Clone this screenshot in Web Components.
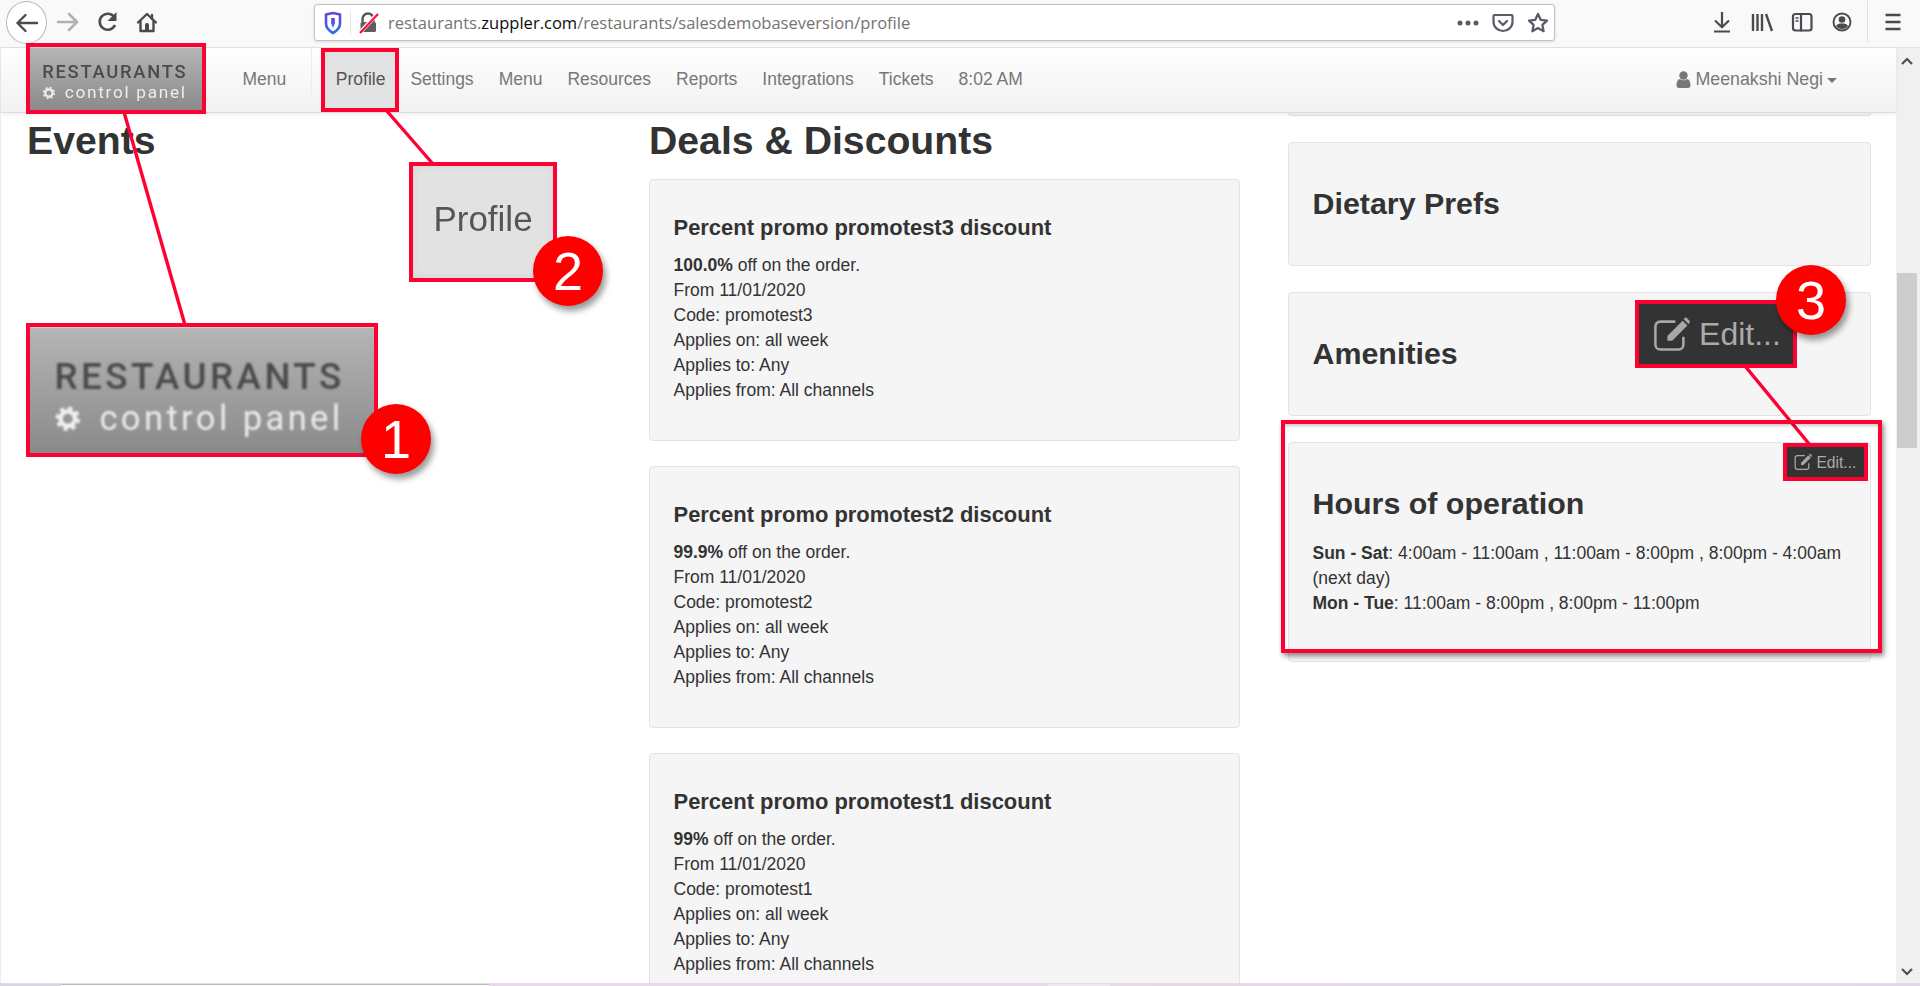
<!DOCTYPE html>
<html lang="en"><head><meta charset="utf-8"><title>Profile</title>
<style>
html,body{margin:0;padding:0;height:100%;overflow:hidden;background:#fff}
body{font-family:"Liberation Sans",Arial,sans-serif;color:#333}
</style></head>
<body>
<app-window>
  <browser-toolbar></browser-toolbar>
  <page-view>
    <app-navbar slot="nav"></app-navbar>
    <section-col slot="a" heading="Events"></section-col>
    <section-col slot="b" heading="Deals &amp; Discounts">
      <promo-card code="promotest3" pct="100.0%"></promo-card>
      <promo-card code="promotest2" pct="99.9%"></promo-card>
      <promo-card code="promotest1" pct="99%"></promo-card>
    </section-col>
    <section-col slot="c">
      <info-card sliver></info-card>
      <info-card heading="Dietary Prefs"></info-card>
      <info-card heading="Amenities"></info-card>
      <info-card heading="Hours of operation" editable>
        <div><b>Sun - Sat</b>: 4:00am - 11:00am , 11:00am - 8:00pm , 8:00pm - 4:00am</div>
        <div>(next day)</div>
        <div><b>Mon - Tue</b>: 11:00am - 8:00pm , 8:00pm - 11:00pm</div>
      </info-card>
    </section-col>
  </page-view>
  <task-strip></task-strip>
  <annotation-layer>
    <anno-lines></anno-lines>
    <anno-box style="left:26px;top:43px;width:180px;height:71px"></anno-box>
    <anno-box style="left:321px;top:48px;width:78px;height:64px"></anno-box>
    <anno-box style="left:26px;top:323px;width:352px;height:134px"><brand-logo big></brand-logo></anno-box>
    <anno-box style="left:409px;top:162px;width:148px;height:120px"><big-profile>Profile</big-profile></anno-box>
    <anno-box shadow style="left:1281px;top:420px;width:601px;height:233px"></anno-box>
    <anno-box style="left:1635px;top:300px;width:162px;height:68px"><edit-label big></edit-label></anno-box>
    <anno-box style="left:1783px;top:443px;width:85px;height:38px"></anno-box>
    <anno-badge style="left:361px;top:404px">1</anno-badge>
    <anno-badge style="left:533px;top:236px">2</anno-badge>
    <anno-badge style="left:1776px;top:265px">3</anno-badge>
  </annotation-layer>
</app-window>

<script>
function def(name, css, html){
  customElements.define(name, class extends HTMLElement{
    constructor(){super();this.attachShadow({mode:'open'});
      if(typeof html!=='function')this.shadowRoot.innerHTML='<style>'+css+'</style>'+html;}
    connectedCallback(){
      if(typeof html==='function')this.shadowRoot.innerHTML='<style>'+css+'</style>'+html(this);
    }
  });
}
const ic=(x,w=40)=>`<svg width="${w}" height="44" viewBox="0 0 ${w} 44" fill="none" stroke="#4a4a4f" stroke-width="2.2" stroke-linecap="round" stroke-linejoin="round">${x}</svg>`;
const I={
 fwd:ic('<path stroke="#b1b1b3" stroke-width="2.6" d="M11 22h19M22 14l8 8-8 8"/>'),
 reload:ic('<path stroke-width="2.6" stroke-linecap="butt" d="M27.5 17.5A8 8 0 1 0 28 25"/><path fill="#4a4a4f" stroke="none" d="M29.5 12v9h-9z"/>'),
 home:ic('<path stroke-width="2.4" d="M11 22.5 20 14l9 8.5M13.5 21v10h13V21"/><path fill="#4a4a4f" stroke="none" d="M18 31v-6a2 2 0 0 1 4 0v6z"/><path stroke-width="2.4" d="M25 15v4"/>'),
 shield:`<svg width="18" height="24" viewBox="0 0 18 24" fill="none"><defs><linearGradient id="g" x1="0" y1="0" x2="0" y2="1"><stop offset="0" stop-color="#6a3fe0"/><stop offset="1" stop-color="#2f6fe8"/></linearGradient></defs><path d="M2 3.500 9 2l7 1.500v9c0 4.500-3.500 7.500-7 9.500-3.500-2-7-5-7-9.500z" stroke="url(#g)" stroke-width="2.600" stroke-linejoin="round"/><path d="M7.200 7h3.600v5.500L9 17l-1.800-4.500z" fill="url(#g)"/></svg>`,
 lock:`<svg width="20" height="22" viewBox="0 0 20 22" fill="none"><path d="M3.500 10V7a5.500 5.500 0 0 1 11 0v3" stroke="#555" stroke-width="2.400"/><rect x="1.500" y="10" width="15.500" height="10" rx="1.500" fill="#5f5f63"/><path d="M0.800 20.500 19 1.500" stroke="#f5f5f5" stroke-width="4"/><path d="M1 21 19 2" stroke="#ff0a3c" stroke-width="2"/></svg>`,
 dots:`<svg width="24" height="8" viewBox="0 0 24 8" fill="#5b5b66"><circle cx="4" cy="4" r="2.500"/><circle cx="12" cy="4" r="2.500"/><circle cx="20" cy="4" r="2.500"/></svg>`,
 pocket:`<svg width="22" height="20" viewBox="0 0 22 20" fill="none" stroke="#5b5b66" stroke-width="2.200" stroke-linecap="round" stroke-linejoin="round"><path d="M2.500 2h17a1 1 0 0 1 1 1v6c0 5-4.500 9-9.500 9S1.500 14 1.500 9V3a1 1 0 0 1 1-1z"/><path d="M7 8l4 4 4-4"/></svg>`,
 star:`<svg width="22" height="22" viewBox="0 0 22 22" fill="none" stroke="#5b5b66" stroke-width="2.300" stroke-linejoin="round"><path d="M11 2l2.700 5.800 6.300.8-4.600 4.300 1.200 6.300L11 16.100l-5.600 3.100 1.200-6.300L2 8.600l6.300-.8z"/></svg>`,
 dl:ic('<path stroke-linecap="butt" d="M20 12v15M13 20.500l7 6.800 7-6.800M12 31.500h16"/>'),
 lib:ic('<path stroke-width="2.400" stroke-linecap="butt" d="M11 14v17M15.500 14v17M20 14v17M24 14l6 17"/>'),
 side:ic('<rect x="11" y="14" width="18.500" height="16.500" rx="2.500"/><path d="M19 14v16.500"/><path stroke-width="1.300" stroke-linecap="butt" d="M13.500 18h3M13.500 21h3"/>'),
 acct:ic('<circle cx="20" cy="22" r="8.500" stroke-width="1.900"/><circle cx="20" cy="19.500" r="3.300" fill="#4a4a4f" stroke="none"/><path d="M14 26c1-2 3-2.500 6-2.500s5 .5 6 2.500c-1.500 2-3.500 3-6 3s-4.500-1-6-3z" fill="#4a4a4f" stroke="none"/>'),
 burger:ic('<path stroke-linecap="butt" stroke-width="2.400" d="M12.500 15h15M12.500 22h15M12.500 29h15"/>'),
 user:`<svg width="15" height="17" viewBox="0 0 15 17" fill="#777"><circle cx="7.500" cy="4.500" r="4.200"/><path d="M0.500 14.500c0-4 1.500-6.300 3.500-6.500 1 .8 2.200 1.300 3.500 1.300S10 8.800 11 8c2 .2 3.500 2.500 3.500 6.500 0 1.500-1 2.500-2.500 2.500H3c-1.500 0-2.500-1-2.500-2.500z"/></svg>`,
 gear:`<svg class="gear" viewBox="0 0 16 16" fill="none" stroke="#f0f0f0"><circle cx="8" cy="8" r="4.200" stroke-width="2.600"/><circle cx="8" cy="8" r="6.200" stroke-width="1.800" stroke-dasharray="2.500 2.370"/></svg>`,
 edit:`<svg class="pen" viewBox="0 0 24 22" fill="none" stroke="#a8a8a8"><path stroke-width="1.600" d="M19 13v5a3 3 0 0 1-3 3H4.500a3 3 0 0 1-3-3V6.500a3 3 0 0 1 3-3H14"/><path fill="#a8a8a8" stroke="none" d="M9 12.500 18.500 3l3 3L12 15.500H9z"/><path fill="#a8a8a8" stroke="none" d="M19.700 1.300a1.100 1.100 0 0 1 1.500 0l1.600 1.600a1.100 1.100 0 0 1 0 1.500L22.200 5 19.200 2z"/></svg>`
};

def('app-window',':host{display:flex;flex-direction:column;position:relative;width:1920px;height:986px;overflow:hidden;background:#fff}','<slot></slot>');

def('browser-toolbar',`
:host{display:flex;align-items:flex-start;height:47px;flex:none;background:#f9f9fa;border-bottom:1px solid #e1e1e2;padding-right:7px}
.cell{width:40px;height:44px;flex:none;display:flex}
.back{width:39px;height:41px;margin:1px 0 0 6px;flex:none;border-radius:50%;background:#fff;border:1px solid #b8b8ba;display:flex;align-items:center;justify-content:center}
address-bar{flex:1;margin:4px 147px 0 147px}
.sep{width:1px;height:42px;margin:1px 5px 0;background:#e0e0e1;flex:none}
`,`<div class="back"><svg width="24" height="20" viewBox="0 0 24 20" fill="none" stroke="#4a4a4f" stroke-width="2.400" stroke-linecap="round" stroke-linejoin="round"><path d="M2.500 10H22M10.500 2 2.500 10l8 8"/></svg></div>
<div class="cell">${I.fwd}</div><div class="cell">${I.reload}</div><div class="cell">${I.home}</div>
<address-bar></address-bar>
<div class="cell">${I.dl}</div><div class="cell">${I.lib}</div><div class="cell">${I.side}</div><div class="cell">${I.acct}</div>
<div class="sep"></div><div class="cell">${I.burger}</div>`);

def('address-bar',`
:host{display:flex;align-items:center;height:37px;box-sizing:border-box;background:#fff;border:1px solid #c2c2c4;border-radius:3px;box-shadow:0 1px 3px rgba(0,0,0,.12);font-family:"Open Sans",sans-serif;font-size:16.550px;color:#737373;padding:0 0 0 9px}
.sh{display:flex;width:18px;margin-right:8px}
.div{width:1px;height:24px;background:#e4e4e5;margin-right:8px}
.lk{display:flex;margin-right:9px}
.url{flex:1;white-space:nowrap}
b{font-weight:400;color:#0c0c0d}
.r{display:flex;align-items:center}
`,`<span class="sh">${I.shield}</span><span class="div"></span><span class="lk">${I.lock}</span>
<span class="url">restaurants.<b>zuppler.com</b>/restaurants/salesdemobaseversion/profile</span>
<span class="r"><span style="display:flex;margin-right:12px">${I.dots}</span><span style="display:flex;margin-right:13px">${I.pocket}</span><span style="display:flex;margin-right:5px">${I.star}</span></span>`);

def('page-view',`
:host{display:flex;flex:1;min-height:0;position:relative}
.left{flex:1;min-width:0;display:flex;flex-direction:column;border-left:1px solid #ececec}
.grid{flex:1;min-height:0;overflow:hidden;display:grid;grid-template-columns:574px 591px 583px;column-gap:48px;padding-left:26px;align-items:start}
.sb{width:24px;flex:none;background:#f0f0f0;display:flex;flex-direction:column;position:relative}
.ch{height:25px;display:flex;align-items:center;justify-content:center;width:22px}
.th{margin:200px 0 0 1px;width:20px;height:175px;background:#cdcdcd}
.sp{flex:1}
`,`<div class="left"><slot name="nav"></slot><div class="grid"><slot name="a"></slot><slot name="b"></slot><slot name="c"></slot></div></div>
<div class="sb"><div class="ch"><svg width="12" height="8" viewBox="0 0 12 8" fill="none" stroke="#505050" stroke-width="2.200"><path d="M1 7l5-5 5 5"/></svg></div><div class="th"></div><div class="sp"></div><div class="ch" style="height:22px"><svg width="12" height="8" viewBox="0 0 12 8" fill="none" stroke="#505050" stroke-width="2.200"><path d="M1 1l5 5 5-5"/></svg></div></div>`);

def('app-navbar',`
:host{display:flex;align-items:stretch;height:64px;flex:none;position:relative;z-index:2;background:linear-gradient(#fff,#f1f1f1);border-bottom:1px solid #dcdcdc;box-shadow:0 2px 5px rgba(0,0,0,.06);font-size:17.500px;color:#777}
brand-logo{width:172px;height:63px;margin:-1px 0 0 29px;flex:none}
nav-item:first-of-type{margin-left:28px}
.div{width:1px;margin:0 11.500px 14px 12px;background:#ececec}
.user{margin-left:auto;padding:0 59px 2px 0;display:flex;align-items:center;gap:5px;font-size:17.800px}
.caret{width:0;height:0;border:5.500px solid transparent;border-top-color:#777;border-bottom:0;margin-left:-1px;margin-top:2px}
`,`<brand-logo></brand-logo><nav-item>Menu</nav-item><div class="div"></div>
<nav-item active>Profile</nav-item><nav-item>Settings</nav-item><nav-item>Menu</nav-item><nav-item>Resources</nav-item><nav-item>Reports</nav-item><nav-item>Integrations</nav-item><nav-item>Tickets</nav-item><nav-item>8:02 AM</nav-item>
<div class="user">${I.user}<span>Meenakshi Negi</span><span class="caret"></span></div>`);

def('nav-item',`
:host{display:flex;align-items:center;padding:0 12.500px 2px;white-space:nowrap;color:#777}
:host([active]){color:#555;background:#e3e3e3;box-shadow:inset 0 2px 6px rgba(0,0,0,.07)}
`,'<slot></slot>');

def('brand-logo',`
:host{display:block;box-sizing:border-box;font-size:18px;background:linear-gradient(#b5b5b5,#8a8a8a);border-top:1px solid #cfcfcf;padding:.83em 0 0 .68em;font-family:Roboto,"Liberation Sans",sans-serif;white-space:nowrap;overflow:hidden}
:host([big]){font-size:36px;width:100%;height:100%;padding-top:.86em}
.in{filter:blur(.3px)}
:host([big]) .in{filter:blur(.8px)}
.a{line-height:1em;letter-spacing:.094em;color:#4b4b4b;font-weight:500;font-size:1.02em}
.b{line-height:1em;margin-top:.16em;color:#ececec;font-size:.96em;letter-spacing:.098em;display:flex;align-items:center}
.gear{width:.8em;height:.8em;margin-right:.5em;flex:none}
`,`<div class="in"><div class="a">RESTAURANTS</div><div class="b">${I.gear}<span>control panel</span></div></div>`);

def('big-profile',`
:host{display:flex;box-sizing:border-box;width:100%;height:100%;padding-bottom:6px;align-items:center;justify-content:center;background:#e2e2e2;box-shadow:inset 0 0 8px rgba(0,0,0,.06);color:#555;font-size:35px}
span{filter:blur(.4px)}`,'<span><slot></slot></span>');

def('section-col',`
:host{display:block;min-width:0}
h2{font-size:39.200px;line-height:44px;margin:6px 0 16px;font-weight:700;color:#333;white-space:nowrap}
.list{display:flex;flex-direction:column;gap:25px}
`,h=>`${h.getAttribute('heading')?`<h2>${h.getAttribute('heading').replace('&','&amp;')}</h2>`:''}<div class="list" style="${h.getAttribute('heading')?'':'gap:26px'}"><slot></slot></div>`);

def('promo-card',`
:host{display:block;box-sizing:border-box;height:262px;background:#f5f5f5;border:1px solid #e3e3e3;border-radius:4px;padding:36px 24px 36px 23.500px;font-size:17.500px;line-height:25px;color:#333}
h4{font-size:21.950px;line-height:24px;margin:0 0 13px;font-weight:700}
`,h=>{const c=h.getAttribute('code');return `<h4>Percent promo ${c} discount</h4><div><b>${h.getAttribute('pct')}</b> off on the order.</div><div>From 11/01/2020</div><div>Code: ${c}</div><div>Applies on: all week</div><div>Applies to: Any</div><div>Applies from: All channels</div>`});

def('info-card',`
:host{display:block;position:relative;box-sizing:border-box;background:#f5f5f5;border:1px solid #e3e3e3;border-radius:4px;padding:43px 24px 45px 23.500px;font-size:17.500px;line-height:25px;color:#333}
:host([sliver]){height:3px;padding:0;border-top:0;border-radius:0 0 4px 4px}
h3{font-size:30.400px;line-height:34px;margin:0;font-weight:700;white-space:nowrap}
.body{margin-top:21px}
edit-label{position:absolute;top:4px;right:6px;width:77px;height:30px;background:#333}
`,h=>{
  if(h.hasAttribute('sliver'))return '';
  const ed=h.hasAttribute('editable');
  return `${ed?'<edit-label></edit-label>':''}<h3>${h.getAttribute('heading')}</h3>${ed?'<div class="body"><slot></slot></div>':''}`});

def('edit-label',`
:host{display:flex;align-items:center;font-size:15.600px;color:#aaa;background:#333;padding-left:7px;box-sizing:border-box;white-space:nowrap;font-family:"Liberation Sans",sans-serif}
:host([big]){font-size:32px;width:100%;height:100%;padding-left:14px}
.pen{width:1.2em;height:1.1em;margin-right:.24em;flex:none}
`,`${I.edit}<span>Edit...</span>`);

def('task-strip',`
:host{display:flex;flex:none;background:#e7d9e9;border-top:1px solid #dfdfdf;height:2px}
i{display:block;height:100%}
`,`<i style="width:61px;background:#d9d6e6"></i><i style="width:428px;background:#fff;box-shadow:inset 0 1px 0 #bbb"></i><i style="width:559px"></i><i style="width:62px;background:#f0e8f0"></i><i style="flex:1;background:linear-gradient(90deg,#e8d8e8,#e0d8ea)"></i>`);

def('annotation-layer',':host{position:absolute;inset:0;z-index:5;pointer-events:none;display:block}','<slot></slot>');

def('anno-lines',':host{position:absolute;inset:0;display:block}svg{display:block}',
`<svg width="1920" height="986" viewBox="0 0 1920 986" fill="none" stroke="#ff0033" stroke-width="3.400"><path d="M124 112 185 325"/><path d="M386 110 433 164"/><path d="M1745 366 1810 445"/></svg>`);

def('anno-box',`
:host{position:absolute;display:block;box-sizing:border-box;border:4px solid #ff0033}
:host([shadow]){box-shadow:2px 3px 5px rgba(0,0,0,.45),inset 0 3px 4px -2px rgba(0,0,0,.3)}
`,'<slot></slot>');

def('anno-badge',`
:host{position:absolute;display:flex;align-items:center;justify-content:center;width:70px;height:70px;border-radius:50%;background:#ff0000;color:#fff;font-size:54px;line-height:1;box-shadow:3px 5px 6px rgba(0,0,0,.4);font-family:"Liberation Sans",sans-serif}
`,'<slot></slot>');
</script>
</body></html>
